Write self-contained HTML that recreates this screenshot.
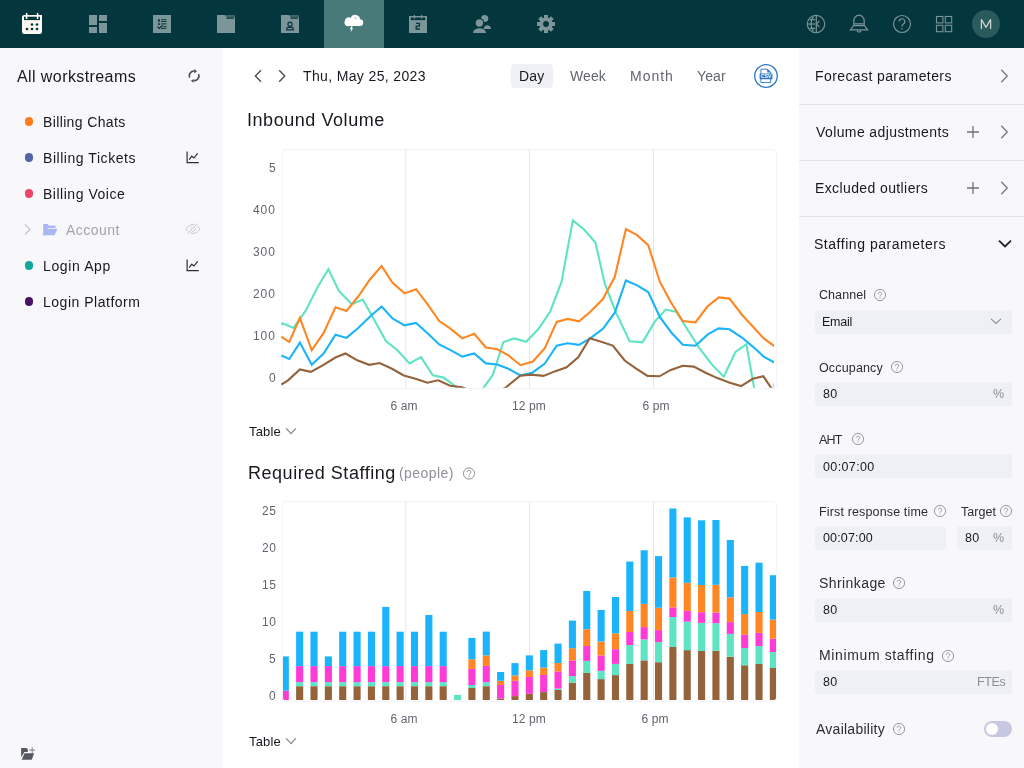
<!DOCTYPE html><html><head><meta charset="utf-8"><title>Forecast</title><style>
*{margin:0;padding:0;box-sizing:border-box}
html,body{width:1024px;height:768px;overflow:hidden;background:#fff;font-family:"Liberation Sans",sans-serif;position:relative}
.t{position:absolute;white-space:nowrap;line-height:1;will-change:transform}
.abs{position:absolute}
svg{position:absolute;overflow:visible}
</style></head><body>
<div class="abs" style="left:0;top:0;width:1024px;height:48px;background:#04363d"></div>
<div class="abs" style="left:324px;top:0;width:60px;height:48px;background:#497a7a"></div>
<svg style="left:0;top:0" width="1024" height="48" viewBox="0 0 1024 48"><path fill="#fdf8f1" d="M22 17.2a2.3 2.3 0 0 1 2.3-2.3H42v16.8a2.3 2.3 0 0 1-2.3 2.3H24.3A2.3 2.3 0 0 1 22 31.7z"/><rect x="24" y="16.7" width="16" height="3.4" fill="#04363d"/><rect x="25.8" y="13" width="1.6" height="6" fill="#fdf8f1"/><rect x="36.8" y="13" width="1.6" height="6" fill="#fdf8f1"/><circle cx="32" cy="24.5" r="1.35" fill="#04363d"/><circle cx="37" cy="24.5" r="1.35" fill="#04363d"/><circle cx="27" cy="29" r="1.35" fill="#04363d"/><circle cx="32" cy="29" r="1.35" fill="#04363d"/><circle cx="37" cy="29" r="1.35" fill="#04363d"/><g fill="#7b9598"><rect x="89" y="15" width="8" height="10"/><rect x="89" y="27" width="8" height="6"/><rect x="99" y="15" width="8" height="6"/><rect x="99" y="23" width="8" height="10"/></g><rect x="153" y="15" width="18" height="18" fill="#7b9598"/><g fill="#04363d"><rect x="158" y="19.2" width="1.8" height="2.6"/><rect x="161" y="19.3" width="5.5" height="0.9"/><rect x="161" y="21.1" width="5.5" height="0.9"/><rect x="158" y="23.2" width="1.8" height="1.8"/><rect x="161" y="23.4" width="5.5" height="1"/><rect x="163" y="26.2" width="3.5" height="0.8"/><rect x="161" y="27.8" width="5.5" height="1"/></g><path d="M157.4 26.6l1.9 1.8 3.2-3.2" fill="none" stroke="#04363d" stroke-width="1.3"/><rect x="217" y="15" width="18" height="18" fill="#7b9598"/><path d="M224.6 15h10.4v2.6H227z" fill="#3f6468"/><rect x="226.6" y="17.4" width="7.2" height="1.3" fill="#04363d"/><rect x="281" y="15" width="18" height="18" fill="#7b9598"/><path d="M288.6 15h10.4v2.6H291z" fill="#3f6468"/><rect x="290.6" y="17.4" width="7.2" height="1.3" fill="#04363d"/><circle cx="290" cy="24.3" r="2.1" fill="none" stroke="#04363d" stroke-width="1.2"/><path d="M286.6 29.8v-.6a1.8 1.8 0 0 1 1.8-1.8h3.2a1.8 1.8 0 0 1 1.8 1.8v.6z" fill="none" stroke="#04363d" stroke-width="1.2"/><path fill="#fff" d="M349 26h10.6a3.4 3.4 0 0 0 .4-6.8 4.8 4.8 0 0 0-9.2-1.4 3.9 3.9 0 0 0-6 3.3A3.5 3.5 0 0 0 349 26z"/><path d="M354.6 17.3l1.6 1.6" stroke="#497a7a" stroke-width="0.9" fill="none"/><path fill="#fff" d="M351.5 26l-1.8 3.3h1.7l-1 3.2 2.8-4.2h-1.6l1.2-2.3z"/><rect x="409" y="16" width="18" height="17" fill="#7b9598"/><rect x="410.8" y="17.5" width="14.4" height="2.6" fill="#04363d"/><rect x="413.8" y="15" width="1.2" height="3.6" fill="#7b9598"/><rect x="421" y="15" width="1.2" height="3.6" fill="#7b9598"/><path d="M416 23.4h3.4v2.7h-3.2v2.9h3.6" fill="none" stroke="#04363d" stroke-width="1.3"/><g fill="#7b9598"><circle cx="484.7" cy="18.5" r="3.6"/><path d="M483.6 29a3.8 4.6 0 0 1 7.5 0z"/></g><circle cx="479.4" cy="23" r="4.9" fill="#04363d"/><path d="M472.2 33.6a6.8 5.6 0 0 1 14.4 0z" fill="#04363d"/><g fill="#7b9598"><circle cx="479.4" cy="23" r="3.7"/><path d="M473 33a6.5 4.8 0 0 1 13 0z"/></g><g fill="#7b9598"><rect x="544.00" y="15.00" width="4" height="4" transform="rotate(0 546 24)"/><rect x="544.00" y="15.00" width="4" height="4" transform="rotate(45 546 24)"/><rect x="544.00" y="15.00" width="4" height="4" transform="rotate(90 546 24)"/><rect x="544.00" y="15.00" width="4" height="4" transform="rotate(135 546 24)"/><rect x="544.00" y="15.00" width="4" height="4" transform="rotate(180 546 24)"/><rect x="544.00" y="15.00" width="4" height="4" transform="rotate(225 546 24)"/><rect x="544.00" y="15.00" width="4" height="4" transform="rotate(270 546 24)"/><rect x="544.00" y="15.00" width="4" height="4" transform="rotate(315 546 24)"/><circle cx="546" cy="24" r="6.6"/></g><circle cx="546" cy="24" r="2.9" fill="#04363d"/><g fill="none" stroke="#7b9598" stroke-width="1.15"><circle cx="816" cy="24" r="8.7"/><path d="M816.3 15.8v16.4"/><path d="M813.6 16.6c-1.8 2-2.6 4.6-2.6 7.4s.8 5.4 2.6 7.4"/><path d="M808 24h7.6"/><path d="M809.6 19.6h5.6M809.6 28.4h5.6"/><path d="M819.4 20.8l-3 3.2 3 3.2"/></g><g fill="none" stroke="#7b9598" stroke-width="1.2"><path d="M850.4 29.8h17.2l-3.4-4.4V21a5.2 5.8 0 0 0-10.4 0v4.4z"/><path d="M854.3 23.8h9.4M854.1 25.6h9.8"/><path d="M857.1 30.2a1.9 1.9 0 0 0 3.8 0"/></g><g fill="none" stroke="#7b9598" stroke-width="1.2"><circle cx="902" cy="24" r="8.5"/></g><path d="M899.2 21.6a2.8 2.8 0 1 1 4.2 2.4c-.9.5-1.4 1.1-1.4 2.1v.6" fill="none" stroke="#7b9598" stroke-width="1.2"/><circle cx="902" cy="28.8" r="0.8" fill="#7b9598"/><g fill="none" stroke="#7b9598" stroke-width="1.1"><rect x="936.5" y="16.5" width="6.4" height="6.4"/><rect x="945.3" y="16.5" width="6.4" height="6.4"/><rect x="936.5" y="25.3" width="6.4" height="6.4"/><rect x="945.3" y="25.3" width="6.4" height="6.4"/></g><circle cx="986" cy="24" r="14" fill="#2b5a5d"/></svg>
<svg style="left:975px;top:14px" width="22" height="20" viewBox="0 0 22 20"><path d="M6.4 15V5.4L11 13.4 15.6 5.4V15" fill="none" stroke="#c9d5d5" stroke-width="1.25" stroke-linejoin="bevel"/></svg>
<div class="abs" style="left:0;top:48px;width:222px;height:720px;background:#f8f8fa"></div>
<div class="t" style="left:16.98px;top:68.68px;font-size:16px;color:#17191e;letter-spacing:0.412px;font-weight:400;">All workstreams</div>
<svg style="left:184px;top:64px" width="20" height="24" viewBox="0 0 20 24"><g fill="none" stroke="#4a4d55" stroke-width="1.6"><path d="M5.6 13.6A4.8 4.8 0 0 1 10.5 7"/><path d="M14.6 10A4.8 4.8 0 0 1 9.6 16.6"/></g><path d="M10.3 4.9l2.7 2.3-2.7 2.2z" fill="#4a4d55"/><path d="M9.5 14.9l-2.6 1.8 2.6 2z" fill="#4a4d55"/></svg>
<div class="abs" style="left:24.5px;top:117.3px;width:8.6px;height:8.6px;border-radius:50%;background:#ff7a1a"></div>
<div class="t" style="left:42.92px;top:114.55px;font-size:14px;color:#17191e;letter-spacing:0.365px;font-weight:400;">Billing Chats</div>
<div class="abs" style="left:24.5px;top:153.3px;width:8.6px;height:8.6px;border-radius:50%;background:#5663a8"></div>
<div class="t" style="left:43.08px;top:150.55px;font-size:14px;color:#17191e;letter-spacing:0.546px;font-weight:400;">Billing Tickets</div>
<svg style="left:186px;top:151.1px" width="14" height="13" viewBox="0 0 14 13"><path d="M1.1 0.5V11.6H12.8" fill="none" stroke="#2a2d33" stroke-width="1.2"/><path d="M3.2 8.6l2.6-3.4 2.2 1.8 3.6-4.6" fill="none" stroke="#2a2d33" stroke-width="1.2"/></svg>
<div class="abs" style="left:24.5px;top:189.3px;width:8.6px;height:8.6px;border-radius:50%;background:#ee4466"></div>
<div class="t" style="left:43.08px;top:186.55px;font-size:14px;color:#17191e;letter-spacing:0.517px;font-weight:400;">Billing Voice</div>
<svg style="left:22px;top:222px" width="40" height="16" viewBox="0 0 40 16"><path d="M3 2.4l5 5-5 5" fill="none" stroke="#bdbec4" stroke-width="1.1"/><path d="M21.2 2h4.3l1.4 1.4h6.6v2.6H25.6l-3.2 7.2H21.2z" fill="#a9b7f5"/><path d="M23.2 6.8h12.2l-2.8 6.4H20.8z" fill="#a9b7f5"/></svg>
<div class="t" style="left:66.40px;top:222.71px;font-size:14px;color:#a3a4ab;letter-spacing:0.45px;font-weight:400;">Account</div>
<svg style="left:185px;top:222.8px" width="16" height="12" viewBox="0 0 16 12"><path d="M1 6c2-3 4.2-4.4 7-4.4S13 3 15 6c-2 3-4.2 4.4-7 4.4S3 9 1 6z" fill="none" stroke="#c9c9d2" stroke-width="1"/><circle cx="8" cy="6" r="2.3" fill="none" stroke="#c9c9d2" stroke-width="1"/><path d="M12.6 0.4L2.4 10.8" stroke="#f8f8fa" stroke-width="2.4"/><path d="M12.6 0.4L2.4 10.8" stroke="#c9c9d2" stroke-width="1"/></svg>
<div class="abs" style="left:24.5px;top:261.3px;width:8.6px;height:8.6px;border-radius:50%;background:#12a89c"></div>
<div class="t" style="left:43.08px;top:258.55px;font-size:14px;color:#17191e;letter-spacing:0.63px;font-weight:400;">Login App</div>
<svg style="left:186px;top:259.1px" width="14" height="13" viewBox="0 0 14 13"><path d="M1.1 0.5V11.6H12.8" fill="none" stroke="#2a2d33" stroke-width="1.2"/><path d="M3.2 8.6l2.6-3.4 2.2 1.8 3.6-4.6" fill="none" stroke="#2a2d33" stroke-width="1.2"/></svg>
<div class="abs" style="left:24.5px;top:297.3px;width:8.6px;height:8.6px;border-radius:50%;background:#4a1265"></div>
<div class="t" style="left:43.08px;top:294.55px;font-size:14px;color:#17191e;letter-spacing:0.512px;font-weight:400;">Login Platform</div>
<svg style="left:20px;top:745px" width="16" height="16" viewBox="0 0 16 16"><path d="M1.1 3h5.1a1.6 1.6 0 0 1 1.6 1.6V7H4.4L1.1 12.6z" fill="#55585f"/><path d="M4.5 8.2h9.7l-2.5 6.5H1.7z" fill="#55585f"/><path d="M12.2 2.2v5.8M9.3 5.1h5.8" stroke="#8d9096" stroke-width="1.1"/></svg>
<svg style="left:250px;top:66px" width="40" height="20" viewBox="0 0 40 20"><g fill="none" stroke="#4a4e55" stroke-width="1.4"><path d="M11 4.2L5.4 10l5.6 5.8"/><path d="M29.2 4.2L34.8 10l-5.6 5.8"/></g></svg>
<div class="t" style="left:303.14px;top:69.27px;font-size:14px;color:#17191e;letter-spacing:0.36px;font-weight:400;">Thu, May 25, 2023</div>
<div class="abs" style="left:511px;top:64px;width:42px;height:24px;border-radius:4px;background:#eff0f5"></div>
<div class="t" style="left:518.50px;top:68.79px;font-size:14px;color:#17191e;letter-spacing:0.13px;font-weight:400;">Day</div>
<div class="t" style="left:569.66px;top:68.67px;font-size:14px;color:#62656d;letter-spacing:0.085px;font-weight:400;">Week</div>
<div class="t" style="left:629.50px;top:68.67px;font-size:14px;color:#62656d;letter-spacing:1.0px;font-weight:400;">Month</div>
<div class="t" style="left:696.86px;top:68.67px;font-size:14px;color:#62656d;letter-spacing:0.142px;font-weight:400;">Year</div>
<svg style="left:754px;top:64px" width="24" height="24" viewBox="0 0 24 24"><circle cx="12" cy="12" r="11.3" fill="none" stroke="#2a78c6" stroke-width="1.3"/><path d="M6.9 5.2h6.6l3.1 3.1v10.2H6.9z" fill="none" stroke="#2a78c6" stroke-width="0.9"/><path d="M13.2 4.8l3.6 3.6h-3.6z" fill="#2a78c6"/><rect x="5.6" y="9.4" width="12.8" height="5.9" rx="0.6" fill="#2a78c6"/><text x="12" y="14.2" font-size="5.2" font-family="Liberation Sans" font-weight="700" text-anchor="middle" fill="#fff" letter-spacing="-0.1">CSV</text></svg>
<div class="t" style="left:246.74px;top:110.98px;font-size:18px;color:#17191e;letter-spacing:0.55px;font-weight:400;">Inbound Volume</div>
<div class="abs" style="left:281.5px;top:148.5px;width:495px;height:240.8px;border:1px solid #f2f2f7;border-radius:4px"></div>
<svg style="left:0;top:0" width="1024" height="768" viewBox="0 0 1024 768"><defs><clipPath id="c1"><rect x="281" y="149" width="493" height="238.8" rx="3"/></clipPath><clipPath id="c2"><rect x="281.8" y="502" width="494.4" height="198" rx="2.5"/></clipPath></defs><line x1="405.8" y1="149" x2="405.8" y2="388" stroke="#e6e5ef" stroke-width="1"/><line x1="405.8" y1="502" x2="405.8" y2="700" stroke="#e6e5ef" stroke-width="1"/><line x1="529.5" y1="149" x2="529.5" y2="388" stroke="#e6e5ef" stroke-width="1"/><line x1="529.5" y1="502" x2="529.5" y2="700" stroke="#e6e5ef" stroke-width="1"/><line x1="653.5" y1="149" x2="653.5" y2="388" stroke="#e6e5ef" stroke-width="1"/><line x1="653.5" y1="502" x2="653.5" y2="700" stroke="#e6e5ef" stroke-width="1"/><g clip-path="url(#c1)" fill="none" stroke-width="2.1" stroke-linejoin="miter" stroke-miterlimit="3"><polyline points="281.3,325.0 282.6,323.2 293.5,327.9 306.0,310.2 317.5,287.3 328.4,269.1 338.9,290.9 351.8,304.3 362.8,299.6 374.4,320.3 385.9,341.1 397.4,350.3 409.5,363.4 421.0,357.2 432.8,375.4 443.7,377.6 454.7,385.8 466.0,398.0 477.0,398.0 483.7,387.6 492.8,374.9 503.4,342.0 514.3,338.4 526.2,341.7 538.6,328.8 550.2,311.5 561.6,281.7 572.8,220.4 583.9,229.2 595.4,242.6 604.9,284.2 616.0,312.7 629.6,341.2 642.5,342.4 654.9,321.4 665.8,309.6 676.4,312.0 687.3,329.3 699.2,347.9 711.4,363.9 723.7,376.7 735.5,352.0 746.4,344.2 758.0,410.0 769.0,400.0 775.5,381.0" stroke="#5ee4c2"/><polyline points="281.3,355.4 289.3,359.0 299.9,342.6 311.7,364.8 323.6,353.5 335.5,334.8 346.5,337.9 358.2,328.0 370.1,316.5 381.6,306.5 392.5,318.4 404.6,325.3 416.0,322.9 427.3,332.9 439.2,344.4 450.1,349.9 462.3,356.6 474.2,353.5 485.9,363.4 497.4,364.5 508.3,368.8 520.5,375.4 532.0,372.9 544.8,363.5 556.7,345.6 567.6,343.2 579.0,344.9 590.6,338.2 602.9,328.8 614.8,312.7 625.9,280.5 637.1,285.4 648.2,292.1 659.8,317.0 671.3,332.5 682.8,344.8 695.5,345.7 707.8,334.4 718.7,328.4 729.5,329.3 741.9,337.5 752.8,346.6 763.7,356.6 775.5,363.0" stroke="#1bb4fb"/><polyline points="281.3,336.6 289.3,342.0 299.9,317.8 311.7,350.3 323.6,332.9 335.5,307.2 346.5,311.0 358.2,296.5 370.1,279.2 381.6,266.0 392.5,282.8 404.6,293.4 416.0,289.2 427.3,303.8 439.2,321.1 450.1,328.4 462.3,338.4 474.2,333.8 485.9,347.5 497.4,349.3 508.3,355.4 520.5,365.2 532.9,361.5 544.8,348.1 556.7,321.9 567.6,318.9 579.0,321.4 590.6,311.5 602.9,299.1 614.8,276.8 625.9,229.1 637.1,235.2 648.2,245.1 659.8,281.7 670.9,302.3 682.8,321.1 695.5,322.3 707.4,306.5 718.7,297.4 729.5,298.6 741.9,314.7 752.8,326.5 763.7,338.4 775.5,347.0" stroke="#ff8622"/><polyline points="281.3,384.5 288.0,380.3 299.9,369.4 310.8,371.8 323.6,364.8 335.4,357.5 345.5,353.5 357.3,360.3 369.2,364.8 379.7,363.0 392.0,368.8 403.8,375.4 416.4,379.0 427.3,382.7 438.3,380.3 450.1,385.8 462.0,387.2 474.0,392.0 486.0,395.0 497.0,392.0 505.6,387.6 520.2,375.8 531.1,374.6 543.5,375.9 554.7,371.4 566.6,367.2 578.2,357.3 589.8,338.2 601.1,341.7 612.8,345.6 624.7,360.5 635.8,368.4 647.5,375.9 659.4,376.3 670.9,369.9 682.8,365.7 693.7,366.6 705.6,372.7 717.4,378.1 729.1,382.5 741.0,386.1 752.8,378.8 763.4,376.3 771.0,387.6 775.5,393.0" stroke="#94633b"/></g><g clip-path="url(#c2)"><rect x="281.75" y="690.70" width="7.1" height="9.30" fill="#ff3bd6"/><rect x="281.75" y="656.40" width="7.1" height="34.30" fill="#1bb4fb"/><rect x="296.11" y="686.20" width="7.1" height="13.80" fill="#94633b"/><rect x="296.11" y="682.10" width="7.1" height="4.10" fill="#5ee4c2"/><rect x="296.11" y="666.10" width="7.1" height="16.00" fill="#ff3bd6"/><rect x="296.11" y="631.70" width="7.1" height="34.40" fill="#1bb4fb"/><rect x="310.46" y="686.20" width="7.1" height="13.80" fill="#94633b"/><rect x="310.46" y="682.10" width="7.1" height="4.10" fill="#5ee4c2"/><rect x="310.46" y="666.10" width="7.1" height="16.00" fill="#ff3bd6"/><rect x="310.46" y="631.70" width="7.1" height="34.40" fill="#1bb4fb"/><rect x="324.81" y="686.20" width="7.1" height="13.80" fill="#94633b"/><rect x="324.81" y="682.10" width="7.1" height="4.10" fill="#5ee4c2"/><rect x="324.81" y="666.10" width="7.1" height="16.00" fill="#ff3bd6"/><rect x="324.81" y="656.40" width="7.1" height="9.70" fill="#1bb4fb"/><rect x="339.17" y="686.20" width="7.1" height="13.80" fill="#94633b"/><rect x="339.17" y="682.10" width="7.1" height="4.10" fill="#5ee4c2"/><rect x="339.17" y="666.10" width="7.1" height="16.00" fill="#ff3bd6"/><rect x="339.17" y="631.70" width="7.1" height="34.40" fill="#1bb4fb"/><rect x="353.52" y="686.20" width="7.1" height="13.80" fill="#94633b"/><rect x="353.52" y="682.10" width="7.1" height="4.10" fill="#5ee4c2"/><rect x="353.52" y="666.10" width="7.1" height="16.00" fill="#ff3bd6"/><rect x="353.52" y="631.70" width="7.1" height="34.40" fill="#1bb4fb"/><rect x="367.88" y="686.20" width="7.1" height="13.80" fill="#94633b"/><rect x="367.88" y="682.10" width="7.1" height="4.10" fill="#5ee4c2"/><rect x="367.88" y="666.10" width="7.1" height="16.00" fill="#ff3bd6"/><rect x="367.88" y="631.70" width="7.1" height="34.40" fill="#1bb4fb"/><rect x="382.24" y="686.20" width="7.1" height="13.80" fill="#94633b"/><rect x="382.24" y="682.10" width="7.1" height="4.10" fill="#5ee4c2"/><rect x="382.24" y="666.10" width="7.1" height="16.00" fill="#ff3bd6"/><rect x="382.24" y="606.90" width="7.1" height="59.20" fill="#1bb4fb"/><rect x="396.59" y="686.20" width="7.1" height="13.80" fill="#94633b"/><rect x="396.59" y="682.10" width="7.1" height="4.10" fill="#5ee4c2"/><rect x="396.59" y="666.10" width="7.1" height="16.00" fill="#ff3bd6"/><rect x="396.59" y="631.70" width="7.1" height="34.40" fill="#1bb4fb"/><rect x="410.94" y="686.20" width="7.1" height="13.80" fill="#94633b"/><rect x="410.94" y="682.10" width="7.1" height="4.10" fill="#5ee4c2"/><rect x="410.94" y="666.10" width="7.1" height="16.00" fill="#ff3bd6"/><rect x="410.94" y="631.70" width="7.1" height="34.40" fill="#1bb4fb"/><rect x="425.30" y="686.20" width="7.1" height="13.80" fill="#94633b"/><rect x="425.30" y="682.10" width="7.1" height="4.10" fill="#5ee4c2"/><rect x="425.30" y="666.10" width="7.1" height="16.00" fill="#ff3bd6"/><rect x="425.30" y="615.00" width="7.1" height="51.10" fill="#1bb4fb"/><rect x="439.65" y="686.20" width="7.1" height="13.80" fill="#94633b"/><rect x="439.65" y="682.10" width="7.1" height="4.10" fill="#5ee4c2"/><rect x="439.65" y="666.10" width="7.1" height="16.00" fill="#ff3bd6"/><rect x="439.65" y="631.70" width="7.1" height="34.40" fill="#1bb4fb"/><rect x="454.01" y="694.90" width="7.1" height="5.10" fill="#5ee4c2"/><rect x="468.37" y="688.00" width="7.1" height="12.00" fill="#94633b"/><rect x="468.37" y="685.00" width="7.1" height="3.00" fill="#5ee4c2"/><rect x="468.37" y="668.90" width="7.1" height="16.10" fill="#ff3bd6"/><rect x="468.37" y="659.30" width="7.1" height="9.60" fill="#ff8622"/><rect x="468.37" y="637.90" width="7.1" height="21.40" fill="#1bb4fb"/><rect x="482.72" y="686.20" width="7.1" height="13.80" fill="#94633b"/><rect x="482.72" y="682.20" width="7.1" height="4.00" fill="#5ee4c2"/><rect x="482.72" y="665.90" width="7.1" height="16.30" fill="#ff3bd6"/><rect x="482.72" y="655.40" width="7.1" height="10.50" fill="#ff8622"/><rect x="482.72" y="631.60" width="7.1" height="23.80" fill="#1bb4fb"/><rect x="497.08" y="698.50" width="7.1" height="1.50" fill="#94633b"/><rect x="497.08" y="685.00" width="7.1" height="13.50" fill="#ff3bd6"/><rect x="497.08" y="680.80" width="7.1" height="4.20" fill="#ff8622"/><rect x="497.08" y="672.00" width="7.1" height="8.80" fill="#1bb4fb"/><rect x="511.43" y="696.10" width="7.1" height="3.90" fill="#94633b"/><rect x="511.43" y="680.80" width="7.1" height="15.30" fill="#ff3bd6"/><rect x="511.43" y="675.50" width="7.1" height="5.30" fill="#ff8622"/><rect x="511.43" y="663.10" width="7.1" height="12.40" fill="#1bb4fb"/><rect x="525.78" y="693.80" width="7.1" height="6.20" fill="#94633b"/><rect x="525.78" y="677.00" width="7.1" height="16.80" fill="#ff3bd6"/><rect x="525.78" y="670.30" width="7.1" height="6.70" fill="#ff8622"/><rect x="525.78" y="655.40" width="7.1" height="14.90" fill="#1bb4fb"/><rect x="540.14" y="692.10" width="7.1" height="7.90" fill="#94633b"/><rect x="540.14" y="675.00" width="7.1" height="17.10" fill="#ff3bd6"/><rect x="540.14" y="667.60" width="7.1" height="7.40" fill="#ff8622"/><rect x="540.14" y="650.10" width="7.1" height="17.50" fill="#1bb4fb"/><rect x="554.50" y="690.00" width="7.1" height="10.00" fill="#94633b"/><rect x="554.50" y="688.60" width="7.1" height="1.40" fill="#5ee4c2"/><rect x="554.50" y="671.50" width="7.1" height="17.10" fill="#ff3bd6"/><rect x="554.50" y="663.00" width="7.1" height="8.50" fill="#ff8622"/><rect x="554.50" y="643.60" width="7.1" height="19.40" fill="#1bb4fb"/><rect x="568.85" y="682.60" width="7.1" height="17.40" fill="#94633b"/><rect x="568.85" y="676.10" width="7.1" height="6.50" fill="#5ee4c2"/><rect x="568.85" y="660.40" width="7.1" height="15.70" fill="#ff3bd6"/><rect x="568.85" y="648.20" width="7.1" height="12.20" fill="#ff8622"/><rect x="568.85" y="620.60" width="7.1" height="27.60" fill="#1bb4fb"/><rect x="583.20" y="672.90" width="7.1" height="27.10" fill="#94633b"/><rect x="583.20" y="660.90" width="7.1" height="12.00" fill="#5ee4c2"/><rect x="583.20" y="646.00" width="7.1" height="14.90" fill="#ff3bd6"/><rect x="583.20" y="629.20" width="7.1" height="16.80" fill="#ff8622"/><rect x="583.20" y="591.00" width="7.1" height="38.20" fill="#1bb4fb"/><rect x="597.56" y="679.10" width="7.1" height="20.90" fill="#94633b"/><rect x="597.56" y="670.80" width="7.1" height="8.30" fill="#5ee4c2"/><rect x="597.56" y="655.50" width="7.1" height="15.30" fill="#ff3bd6"/><rect x="597.56" y="641.50" width="7.1" height="14.00" fill="#ff8622"/><rect x="597.56" y="609.90" width="7.1" height="31.60" fill="#1bb4fb"/><rect x="611.91" y="675.10" width="7.1" height="24.90" fill="#94633b"/><rect x="611.91" y="663.90" width="7.1" height="11.20" fill="#5ee4c2"/><rect x="611.91" y="649.20" width="7.1" height="14.70" fill="#ff3bd6"/><rect x="611.91" y="633.30" width="7.1" height="15.90" fill="#ff8622"/><rect x="611.91" y="597.00" width="7.1" height="36.30" fill="#1bb4fb"/><rect x="626.27" y="663.90" width="7.1" height="36.10" fill="#94633b"/><rect x="626.27" y="645.00" width="7.1" height="18.90" fill="#5ee4c2"/><rect x="626.27" y="632.00" width="7.1" height="13.00" fill="#ff3bd6"/><rect x="626.27" y="611.00" width="7.1" height="21.00" fill="#ff8622"/><rect x="626.27" y="561.50" width="7.1" height="49.50" fill="#1bb4fb"/><rect x="640.62" y="660.40" width="7.1" height="39.60" fill="#94633b"/><rect x="640.62" y="639.40" width="7.1" height="21.00" fill="#5ee4c2"/><rect x="640.62" y="627.10" width="7.1" height="12.30" fill="#ff3bd6"/><rect x="640.62" y="603.90" width="7.1" height="23.20" fill="#ff8622"/><rect x="640.62" y="550.30" width="7.1" height="53.60" fill="#1bb4fb"/><rect x="654.98" y="662.20" width="7.1" height="37.80" fill="#94633b"/><rect x="654.98" y="642.10" width="7.1" height="20.10" fill="#5ee4c2"/><rect x="654.98" y="630.10" width="7.1" height="12.00" fill="#ff3bd6"/><rect x="654.98" y="607.70" width="7.1" height="22.40" fill="#ff8622"/><rect x="654.98" y="556.10" width="7.1" height="51.60" fill="#1bb4fb"/><rect x="669.34" y="647.00" width="7.1" height="53.00" fill="#94633b"/><rect x="669.34" y="617.00" width="7.1" height="30.00" fill="#5ee4c2"/><rect x="669.34" y="607.40" width="7.1" height="9.60" fill="#ff3bd6"/><rect x="669.34" y="577.50" width="7.1" height="29.90" fill="#ff8622"/><rect x="669.34" y="508.50" width="7.1" height="69.00" fill="#1bb4fb"/><rect x="683.69" y="650.10" width="7.1" height="49.90" fill="#94633b"/><rect x="683.69" y="621.60" width="7.1" height="28.50" fill="#5ee4c2"/><rect x="683.69" y="610.90" width="7.1" height="10.70" fill="#ff3bd6"/><rect x="683.69" y="582.80" width="7.1" height="28.10" fill="#ff8622"/><rect x="683.69" y="517.40" width="7.1" height="65.40" fill="#1bb4fb"/><rect x="698.05" y="651.00" width="7.1" height="49.00" fill="#94633b"/><rect x="698.05" y="622.90" width="7.1" height="28.10" fill="#5ee4c2"/><rect x="698.05" y="612.20" width="7.1" height="10.70" fill="#ff3bd6"/><rect x="698.05" y="585.00" width="7.1" height="27.20" fill="#ff8622"/><rect x="698.05" y="520.30" width="7.1" height="64.70" fill="#1bb4fb"/><rect x="712.40" y="650.70" width="7.1" height="49.30" fill="#94633b"/><rect x="712.40" y="623.20" width="7.1" height="27.50" fill="#5ee4c2"/><rect x="712.40" y="612.50" width="7.1" height="10.70" fill="#ff3bd6"/><rect x="712.40" y="584.80" width="7.1" height="27.70" fill="#ff8622"/><rect x="712.40" y="520.00" width="7.1" height="64.80" fill="#1bb4fb"/><rect x="726.75" y="656.80" width="7.1" height="43.20" fill="#94633b"/><rect x="726.75" y="633.90" width="7.1" height="22.90" fill="#5ee4c2"/><rect x="726.75" y="622.10" width="7.1" height="11.80" fill="#ff3bd6"/><rect x="726.75" y="597.30" width="7.1" height="24.80" fill="#ff8622"/><rect x="726.75" y="540.00" width="7.1" height="57.30" fill="#1bb4fb"/><rect x="741.11" y="665.30" width="7.1" height="34.70" fill="#94633b"/><rect x="741.11" y="648.00" width="7.1" height="17.30" fill="#5ee4c2"/><rect x="741.11" y="634.70" width="7.1" height="13.30" fill="#ff3bd6"/><rect x="741.11" y="614.10" width="7.1" height="20.60" fill="#ff8622"/><rect x="741.11" y="565.90" width="7.1" height="48.20" fill="#1bb4fb"/><rect x="755.47" y="664.00" width="7.1" height="36.00" fill="#94633b"/><rect x="755.47" y="646.10" width="7.1" height="17.90" fill="#5ee4c2"/><rect x="755.47" y="632.80" width="7.1" height="13.30" fill="#ff3bd6"/><rect x="755.47" y="612.00" width="7.1" height="20.80" fill="#ff8622"/><rect x="755.47" y="562.70" width="7.1" height="49.30" fill="#1bb4fb"/><rect x="769.82" y="668.00" width="7.1" height="32.00" fill="#94633b"/><rect x="769.82" y="652.00" width="7.1" height="16.00" fill="#5ee4c2"/><rect x="769.82" y="638.70" width="7.1" height="13.30" fill="#ff3bd6"/><rect x="769.82" y="619.50" width="7.1" height="19.20" fill="#ff8622"/><rect x="769.82" y="575.20" width="7.1" height="44.30" fill="#1bb4fb"/></g></svg>
<div class="t" style="right:748.50px;top:161.84px;font-size:12px;color:#62656d;letter-spacing:0px;font-weight:400;">5</div>
<div class="t" style="right:747.80px;top:204.14px;font-size:12px;color:#62656d;letter-spacing:0.9px;font-weight:400;">400</div>
<div class="t" style="right:747.80px;top:246.14px;font-size:12px;color:#62656d;letter-spacing:0.9px;font-weight:400;">300</div>
<div class="t" style="right:747.80px;top:288.14px;font-size:12px;color:#62656d;letter-spacing:0.9px;font-weight:400;">200</div>
<div class="t" style="right:747.80px;top:330.14px;font-size:12px;color:#62656d;letter-spacing:0.9px;font-weight:400;">100</div>
<div class="t" style="right:748.50px;top:372.14px;font-size:12px;color:#62656d;letter-spacing:0px;font-weight:400;">0</div>
<div class="t" style="left:204.00px;width:400px;text-align:center;top:400.34px;font-size:12px;color:#62656d;letter-spacing:0.1px;font-weight:400;">6 am</div>
<div class="t" style="left:329.00px;width:400px;text-align:center;top:400.34px;font-size:12px;color:#62656d;letter-spacing:0.1px;font-weight:400;">12 pm</div>
<div class="t" style="left:455.60px;width:400px;text-align:center;top:400.34px;font-size:12px;color:#62656d;letter-spacing:0.1px;font-weight:400;">6 pm</div>
<div class="t" style="left:249.14px;top:424.74px;font-size:13px;color:#17191e;letter-spacing:0.14px;font-weight:400;">Table</div>
<svg style="left:284px;top:425px" width="14" height="12" viewBox="0 0 14 12"><path d="M2.2 3.4l4.8 5.2 4.8-5.2" fill="none" stroke="#85888f" stroke-width="1.3"/></svg>
<div class="abs" style="left:281.5px;top:501.3px;width:495px;height:200.5px;border:1px solid #f2f2f7;border-radius:4px"></div>
<div class="t" style="left:247.70px;top:463.75px;font-size:18px;color:#17191e;letter-spacing:0.53px;font-weight:400;">Required Staffing</div>
<div class="t" style="left:398.70px;top:466.23px;font-size:14px;color:#8e9097;letter-spacing:0.45px;font-weight:400;">(people)</div>
<svg style="left:462px;top:467px" width="14" height="14" viewBox="0 0 14 14"><circle cx="7" cy="6.5" r="5.6" fill="none" stroke="#8e9097" stroke-width="1"/><path d="M5.2 5.1a1.8 1.8 0 1 1 2.7 1.6c-.6.3-.9.7-.9 1.3v.3" fill="none" stroke="#8e9097" stroke-width="1"/><circle cx="7" cy="9.6" r="0.55" fill="#8e9097"/></svg>
<div class="t" style="right:747.50px;top:504.74px;font-size:12px;color:#62656d;letter-spacing:0.5px;font-weight:400;">25</div>
<div class="t" style="right:747.50px;top:541.84px;font-size:12px;color:#62656d;letter-spacing:0.5px;font-weight:400;">20</div>
<div class="t" style="right:747.50px;top:578.94px;font-size:12px;color:#62656d;letter-spacing:0.5px;font-weight:400;">15</div>
<div class="t" style="right:747.50px;top:616.04px;font-size:12px;color:#62656d;letter-spacing:0.5px;font-weight:400;">10</div>
<div class="t" style="right:748.00px;top:652.94px;font-size:12px;color:#62656d;letter-spacing:0px;font-weight:400;">5</div>
<div class="t" style="right:748.00px;top:690.04px;font-size:12px;color:#62656d;letter-spacing:0px;font-weight:400;">0</div>
<div class="t" style="left:204.30px;width:400px;text-align:center;top:713.24px;font-size:12px;color:#62656d;letter-spacing:0.1px;font-weight:400;">6 am</div>
<div class="t" style="left:329.00px;width:400px;text-align:center;top:713.24px;font-size:12px;color:#62656d;letter-spacing:0.1px;font-weight:400;">12 pm</div>
<div class="t" style="left:455.20px;width:400px;text-align:center;top:713.24px;font-size:12px;color:#62656d;letter-spacing:0.1px;font-weight:400;">6 pm</div>
<div class="t" style="left:249.14px;top:734.74px;font-size:13px;color:#17191e;letter-spacing:0.14px;font-weight:400;">Table</div>
<svg style="left:284px;top:735px" width="14" height="12" viewBox="0 0 14 12"><path d="M2.2 3.4l4.8 5.2 4.8-5.2" fill="none" stroke="#85888f" stroke-width="1.3"/></svg>
<div class="abs" style="left:799px;top:48px;width:225px;height:720px;background:#f8f8fb"></div>
<div class="abs" style="left:799px;top:104px;width:225px;height:1px;background:#e3e3ec"></div>
<div class="abs" style="left:799px;top:160px;width:225px;height:1px;background:#e3e3ec"></div>
<div class="abs" style="left:799px;top:216px;width:225px;height:1px;background:#e3e3ec"></div>
<div class="t" style="left:815.02px;top:68.87px;font-size:14px;color:#17191e;letter-spacing:0.401px;font-weight:400;">Forecast parameters</div>
<svg style="left:998px;top:68px" width="14" height="16" viewBox="0 0 14 16"><path d="M3.2 1.8l6 6.2-6 6.2" fill="none" stroke="#7d8087" stroke-width="1.5"/></svg>
<div class="t" style="left:815.90px;top:125.05px;font-size:14px;color:#17191e;letter-spacing:0.393px;font-weight:400;">Volume adjustments</div>
<svg style="left:966px;top:125px" width="14" height="14" viewBox="0 0 14 14"><path d="M7 1v12M1 7h12" fill="none" stroke="#6f7279" stroke-width="1.3"/></svg>
<svg style="left:998px;top:124px" width="14" height="16" viewBox="0 0 14 16"><path d="M3.2 1.8l6 6.2-6 6.2" fill="none" stroke="#7d8087" stroke-width="1.5"/></svg>
<div class="t" style="left:814.86px;top:181.49px;font-size:14px;color:#17191e;letter-spacing:0.39px;font-weight:400;">Excluded outliers</div>
<svg style="left:966px;top:181px" width="14" height="14" viewBox="0 0 14 14"><path d="M7 1v12M1 7h12" fill="none" stroke="#6f7279" stroke-width="1.3"/></svg>
<svg style="left:998px;top:180px" width="14" height="16" viewBox="0 0 14 16"><path d="M3.2 1.8l6 6.2-6 6.2" fill="none" stroke="#7d8087" stroke-width="1.5"/></svg>
<div class="t" style="left:814.18px;top:237.29px;font-size:14px;color:#17191e;letter-spacing:0.534px;font-weight:400;">Staffing parameters</div>
<svg style="left:996px;top:236px" width="18" height="16" viewBox="0 0 18 16"><path d="M3 4.6l6 5.8 6-5.8" fill="none" stroke="#1f2228" stroke-width="1.8"/></svg>
<div class="t" style="left:818.50px;top:289.36px;font-size:12.5px;color:#2a2d33;letter-spacing:0.067px;font-weight:400;">Channel</div>
<svg style="left:873px;top:288px" width="14" height="14" viewBox="0 0 14 14"><circle cx="7" cy="7" r="5.6" fill="none" stroke="#8e9097" stroke-width="0.9"/><path d="M5.3 5.7a1.7 1.7 0 1 1 2.6 1.5c-.6.3-.9.7-.9 1.2v.3" fill="none" stroke="#8e9097" stroke-width="0.9"/><circle cx="7" cy="10" r="0.5" fill="#8e9097"/></svg>
<div class="abs" style="left:815px;top:310px;width:197px;height:24px;border-radius:4px;background:#eff0f5"></div>
<div class="t" style="left:822.48px;top:316.14px;font-size:12.5px;color:#17191e;letter-spacing:-0.22px;font-weight:400;">Email</div>
<svg style="left:988px;top:316px" width="16" height="12" viewBox="0 0 16 12"><path d="M3 2.8l5 4.6 5-4.6" fill="none" stroke="#8c8f96" stroke-width="1.1"/></svg>
<div class="t" style="left:818.50px;top:361.76px;font-size:12.5px;color:#2a2d33;letter-spacing:0.15px;font-weight:400;">Occupancy</div>
<svg style="left:890px;top:360px" width="14" height="14" viewBox="0 0 14 14"><circle cx="7" cy="7" r="5.6" fill="none" stroke="#8e9097" stroke-width="0.9"/><path d="M5.3 5.7a1.7 1.7 0 1 1 2.6 1.5c-.6.3-.9.7-.9 1.2v.3" fill="none" stroke="#8e9097" stroke-width="0.9"/><circle cx="7" cy="10" r="0.5" fill="#8e9097"/></svg>
<div class="abs" style="left:815px;top:382px;width:197px;height:24px;border-radius:4px;background:#eff0f5"></div>
<div class="t" style="left:823.20px;top:387.52px;font-size:12.5px;color:#17191e;letter-spacing:0.2px;font-weight:400;">80</div>
<div class="t" style="right:19.50px;top:387.52px;font-size:12.5px;color:#8c8f96;letter-spacing:0px;font-weight:400;">%</div>
<div class="t" style="left:819.30px;top:433.62px;font-size:12.5px;color:#2a2d33;letter-spacing:-0.8px;font-weight:400;">AHT</div>
<svg style="left:851px;top:432px" width="14" height="14" viewBox="0 0 14 14"><circle cx="7" cy="7" r="5.6" fill="none" stroke="#8e9097" stroke-width="0.9"/><path d="M5.3 5.7a1.7 1.7 0 1 1 2.6 1.5c-.6.3-.9.7-.9 1.2v.3" fill="none" stroke="#8e9097" stroke-width="0.9"/><circle cx="7" cy="10" r="0.5" fill="#8e9097"/></svg>
<div class="abs" style="left:815px;top:454px;width:197px;height:24px;border-radius:4px;background:#eff0f5"></div>
<div class="t" style="left:822.50px;top:460.60px;font-size:12.5px;color:#17191e;letter-spacing:0.378px;font-weight:400;">00:07:00</div>
<div class="t" style="left:818.50px;top:505.52px;font-size:12.5px;color:#2a2d33;letter-spacing:0.147px;font-weight:400;">First response time</div>
<svg style="left:933px;top:504px" width="14" height="14" viewBox="0 0 14 14"><circle cx="7" cy="7" r="5.6" fill="none" stroke="#8e9097" stroke-width="0.9"/><path d="M5.3 5.7a1.7 1.7 0 1 1 2.6 1.5c-.6.3-.9.7-.9 1.2v.3" fill="none" stroke="#8e9097" stroke-width="0.9"/><circle cx="7" cy="10" r="0.5" fill="#8e9097"/></svg>
<div class="t" style="left:961.30px;top:505.52px;font-size:12.5px;color:#2a2d33;letter-spacing:0.04px;font-weight:400;">Target</div>
<svg style="left:998.7px;top:504px" width="14" height="14" viewBox="0 0 14 14"><circle cx="7" cy="7" r="5.6" fill="none" stroke="#8e9097" stroke-width="0.9"/><path d="M5.3 5.7a1.7 1.7 0 1 1 2.6 1.5c-.6.3-.9.7-.9 1.2v.3" fill="none" stroke="#8e9097" stroke-width="0.9"/><circle cx="7" cy="10" r="0.5" fill="#8e9097"/></svg>
<div class="abs" style="left:815px;top:526px;width:131px;height:24px;border-radius:4px;background:#eff0f5"></div>
<div class="abs" style="left:957px;top:526px;width:55px;height:24px;border-radius:4px;background:#eff0f5"></div>
<div class="t" style="left:822.50px;top:531.62px;font-size:12.5px;color:#17191e;letter-spacing:0.15px;font-weight:400;">00:07:00</div>
<div class="t" style="left:965.00px;top:531.62px;font-size:12.5px;color:#17191e;letter-spacing:0.2px;font-weight:400;">80</div>
<div class="t" style="right:19.50px;top:531.62px;font-size:12.5px;color:#8c8f96;letter-spacing:0px;font-weight:400;">%</div>
<div class="t" style="left:818.50px;top:576.27px;font-size:14px;color:#2a2d33;letter-spacing:0.42px;font-weight:400;">Shrinkage</div>
<svg style="left:892px;top:576px" width="14" height="14" viewBox="0 0 14 14"><circle cx="7" cy="7" r="5.6" fill="none" stroke="#8e9097" stroke-width="0.9"/><path d="M5.3 5.7a1.7 1.7 0 1 1 2.6 1.5c-.6.3-.9.7-.9 1.2v.3" fill="none" stroke="#8e9097" stroke-width="0.9"/><circle cx="7" cy="10" r="0.5" fill="#8e9097"/></svg>
<div class="abs" style="left:815px;top:598px;width:197px;height:24px;border-radius:4px;background:#eff0f5"></div>
<div class="t" style="left:823.20px;top:603.52px;font-size:12.5px;color:#17191e;letter-spacing:0.2px;font-weight:400;">80</div>
<div class="t" style="right:19.50px;top:603.52px;font-size:12.5px;color:#8c8f96;letter-spacing:0px;font-weight:400;">%</div>
<div class="t" style="left:818.50px;top:648.05px;font-size:14px;color:#2a2d33;letter-spacing:0.627px;font-weight:400;">Minimum staffing</div>
<svg style="left:941px;top:648.5px" width="14" height="14" viewBox="0 0 14 14"><circle cx="7" cy="7" r="5.6" fill="none" stroke="#8e9097" stroke-width="0.9"/><path d="M5.3 5.7a1.7 1.7 0 1 1 2.6 1.5c-.6.3-.9.7-.9 1.2v.3" fill="none" stroke="#8e9097" stroke-width="0.9"/><circle cx="7" cy="10" r="0.5" fill="#8e9097"/></svg>
<div class="abs" style="left:815px;top:670px;width:197px;height:24px;border-radius:4px;background:#eff0f5"></div>
<div class="t" style="left:823.20px;top:675.52px;font-size:12.5px;color:#17191e;letter-spacing:0.2px;font-weight:400;">80</div>
<div class="t" style="right:18.66px;top:675.52px;font-size:12.5px;color:#8c8f96;letter-spacing:-0.39px;font-weight:400;">FTEs</div>
<div class="t" style="left:815.82px;top:722.27px;font-size:14px;color:#2a2d33;letter-spacing:0.254px;font-weight:400;">Availability</div>
<svg style="left:892px;top:722px" width="14" height="14" viewBox="0 0 14 14"><circle cx="7" cy="7" r="5.6" fill="none" stroke="#8e9097" stroke-width="0.9"/><path d="M5.3 5.7a1.7 1.7 0 1 1 2.6 1.5c-.6.3-.9.7-.9 1.2v.3" fill="none" stroke="#8e9097" stroke-width="0.9"/><circle cx="7" cy="10" r="0.5" fill="#8e9097"/></svg>
<div class="abs" style="left:984px;top:721px;width:28px;height:16px;border-radius:8px;background:#c6c7e0"></div>
<div class="abs" style="left:986px;top:723px;width:12px;height:12px;border-radius:50%;background:#fff"></div>
</body></html>
